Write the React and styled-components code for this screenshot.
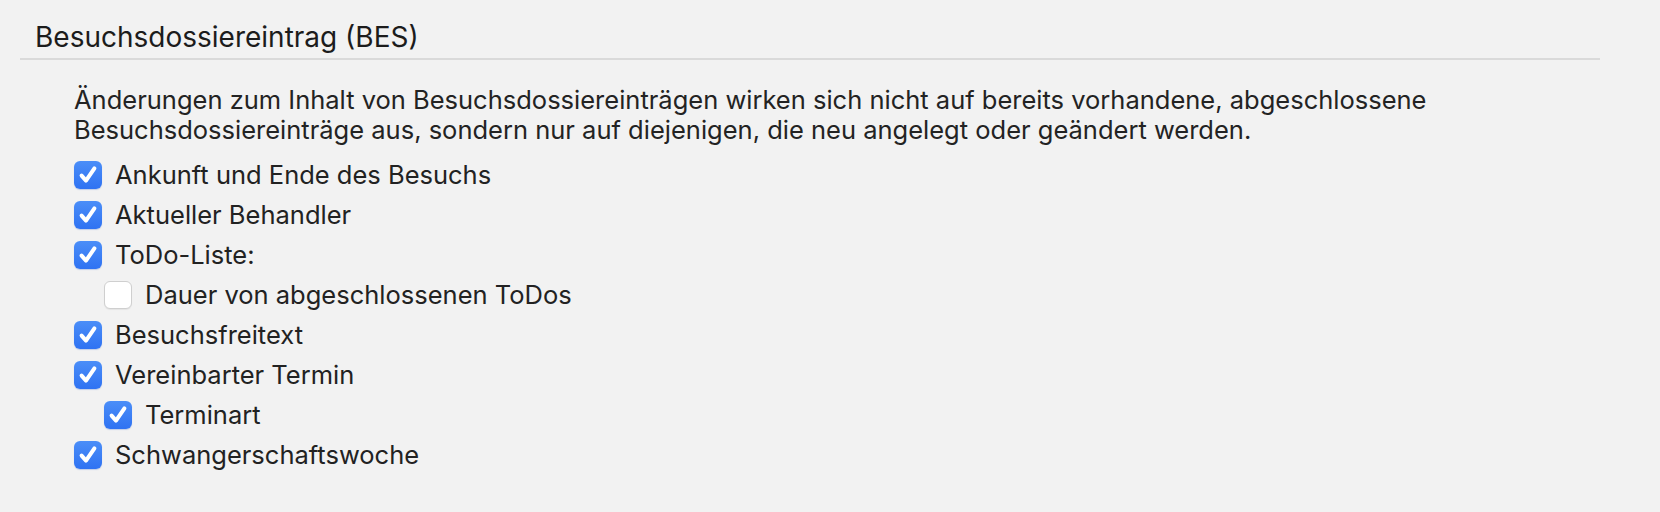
import React from "react";
import styled, { createGlobalStyle } from "styled-components";

const GlobalStyle = createGlobalStyle`
  html, body {
    margin: 0;
    padding: 0;
    background: #f2f2f2;
  }
  body {
    font-family: Inter, "Noto Sans", "Liberation Sans", sans-serif;
    color: #222222;
  }
`;

const Page = styled.div`
  width: 1580px;
  padding: 0 60px 0 20px;
`;

const Header = styled.div`
  padding: 21px 0 5px 15px;
  border-bottom: 2px solid #dadada;
`;

const Title = styled.h2`
  margin: 0;
  font-size: 28px;
  line-height: 32px;
  font-weight: 400;
  color: #1c1c1c;
`;

const Body = styled.div`
  padding: 25px 0 0 54px;
`;

const Note = styled.p`
  margin: 0;
  font-size: 25.5px;
  line-height: 30px;
  color: #232323;
  white-space: nowrap;
`;

const List = styled.ul`
  list-style: none;
  margin: 10px 0 0;
  padding: 0;
`;

const Row = styled.li`
  display: flex;
  align-items: center;
  gap: 13px;
  height: 40px;
  padding-left: ${(p) => (p.$nested ? 30 : 0)}px;
  font-size: 25.5px;
  line-height: 40px;
  color: #222222;
`;

const Box = styled.span`
  flex: none;
  width: 28px;
  height: 28px;
  border-radius: 6px;
  display: flex;
  align-items: center;
  justify-content: center;
  box-sizing: border-box;
  background: ${(p) =>
    p.$checked ? "linear-gradient(#4b8ef8, #2f72f2)" : "#ffffff"};
  border: ${(p) => (p.$checked ? "none" : "1.5px solid #cfcfcf")};
  box-shadow: ${(p) =>
    p.$checked
      ? "0 1px 1px rgba(40, 90, 200, 0.25)"
      : "0 1px 1px rgba(0, 0, 0, 0.06)"};
`;

function CheckBox({ checked }) {
  return (
    <Box $checked={checked}>
      {checked && (
        <svg width="28" height="28" viewBox="0 0 28 28">
          <path
            d="M7.6 14.6 L12 19.6 L20.4 7.4"
            fill="none"
            stroke="#ffffff"
            strokeWidth="4"
            strokeLinecap="round"
            strokeLinejoin="round"
          />
        </svg>
      )}
    </Box>
  );
}

const options = [
  { label: "Ankunft und Ende des Besuchs", checked: true },
  { label: "Aktueller Behandler", checked: true },
  { label: "ToDo-Liste:", checked: true },
  { label: "Dauer von abgeschlossenen ToDos", checked: false, nested: true },
  { label: "Besuchsfreitext", checked: true },
  { label: "Vereinbarter Termin", checked: true },
  { label: "Terminart", checked: true, nested: true },
  { label: "Schwangerschaftswoche", checked: true },
];

export default function App() {
  return (
    <>
      <GlobalStyle />
      <Page>
        <Header>
          <Title>Besuchsdossiereintrag (BES)</Title>
        </Header>
        <Body>
          <Note>
            Änderungen zum Inhalt von Besuchsdossiereinträgen wirken sich nicht
            auf bereits vorhandene, abgeschlossene
            <br />
            Besuchsdossiereinträge aus, sondern nur auf diejenigen, die neu
            angelegt oder geändert werden.
          </Note>
          <List>
            {options.map((o) => (
              <Row key={o.label} $nested={o.nested}>
                <CheckBox checked={o.checked} />
                <span>{o.label}</span>
              </Row>
            ))}
          </List>
        </Body>
      </Page>
    </>
  );
}
